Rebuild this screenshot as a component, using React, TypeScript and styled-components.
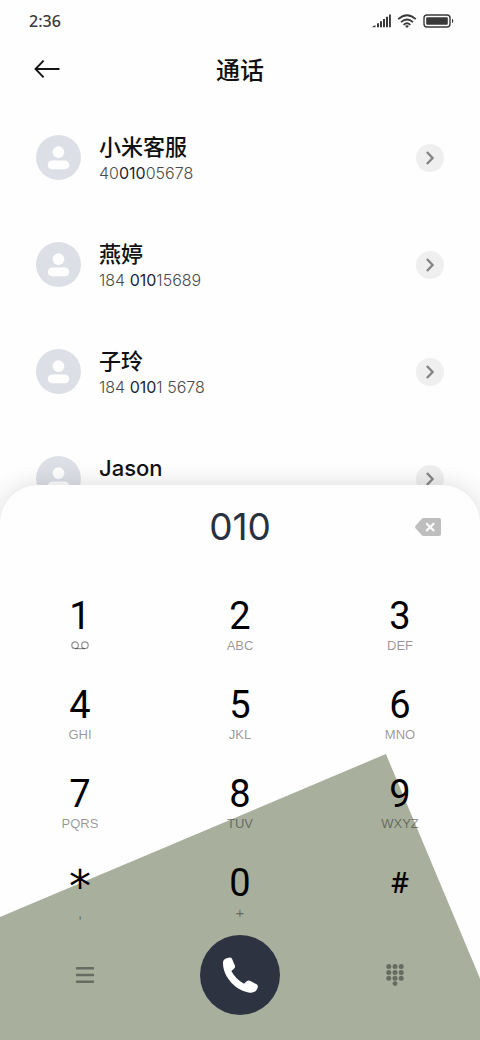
import React, { useState } from "react";
import styled, { createGlobalStyle } from "styled-components";

const GlobalStyle = createGlobalStyle`
  *, *::before { box-sizing: border-box; }
  body {
    margin: 0;
    background: #fefefe;
    color: #111;
    font-family: Inter, "Noto Sans CJK SC", sans-serif;
  }
  button, input { font: inherit; color: inherit; border: 0; background: none; padding: 0; margin: 0; }
  button { cursor: pointer; }
  svg { display: block; }
`;

const Screen = styled.div`
  display: flex;
  flex-direction: column;
  height: 100vh;
  overflow: hidden;
`;

const StatusBar = styled.div`
  display: flex;
  align-items: center;
  justify-content: space-between;
  height: 42px;
  flex: none;
  padding: 0 26px 0 29px;
  color: #3a3a3a;
`;

const Clock = styled.time`
  font-family: "Noto Sans", sans-serif;
  font-size: 16px;
  font-weight: 500;
`;

const StatusIcons = styled.div`
  display: flex;
  align-items: center;
  gap: 6px;
`;

const Header = styled.header`
  display: grid;
  grid-template-columns: 26px 1fr 26px;
  align-items: center;
  flex: none;
  height: 54px;
  padding: 0 34px;
`;

const Title = styled.h1`
  margin: 0;
  text-align: center;
  font-family: "Noto Sans CJK SC", sans-serif;
  font-size: 24px;
  line-height: 32px;
  font-weight: 500;
`;

const ContactList = styled.ul`
  flex: 1 1 0;
  min-height: 0;
  overflow: hidden;
  display: flex;
  flex-direction: column;
  gap: 60px;
  list-style: none;
  margin: 0;
  padding: 38px 36px 0;
`;

const ContactRow = styled.li`
  display: flex;
  align-items: center;
  flex: none;
  height: 47px;
  gap: 18px;
`;

const Avatar = styled.svg`
  flex: none;
  width: 45px;
  height: 45px;
`;

const ContactText = styled.div`
  flex: 1;
  align-self: flex-start;
`;

const ContactName = styled.div`
  font-size: 22px;
  line-height: 26px;
  font-weight: 500;
`;

const ContactNumber = styled.div`
  font-size: 16px;
  line-height: 26px;
  font-weight: 300;
  color: #4c4c4c;
`;

const Match = styled.span`
  font-weight: 400;
  color: #1f2536;
`;

const DetailButton = styled.button`
  display: grid;
  place-items: center;
  width: 28px;
  height: 28px;
  border-radius: 50%;
  background: #efefef;
`;

const Sheet = styled.section`
  position: relative;
  flex: none;
  margin-top: -36px;
  padding-bottom: 25px;
  border-radius: 38px 38px 0 0;
  background: #fefefe;
  box-shadow: 0 0 24px rgba(0, 0, 0, 0.14);

  &::before {
    content: "";
    position: absolute;
    inset: auto 0 0 0;
    height: 286px;
    background: #a8af9d;
    clip-path: polygon(0 57%, 80.4% 0, 100% 78.5%, 100% 100%, 0 100%);
  }

  & > * { position: relative; }
`;

const EntryRow = styled.div`
  display: grid;
  grid-template-columns: 26px 1fr 26px;
  align-items: center;
  height: 84px;
  padding: 0 39px;
`;

const Entry = styled.input`
  grid-column: 2;
  min-width: 0;
  text-align: center;
  outline: none;
  font-size: 37px;
  line-height: 46px;
  color: #293040;
`;

const Keypad = styled.div`
  display: grid;
  grid-template-columns: repeat(3, 1fr);
  row-gap: 28px;
  padding-top: 24px;
`;

const Key = styled.button`
  display: flex;
  flex-direction: column;
  align-items: center;
  height: 61px;
`;

const keyFonts = {
  digit: { family: "Roboto", size: 38, line: 46, weight: 400 },
  star: { family: "DejaVu Sans", size: 44, line: 54, weight: 400 },
  hash: { family: "Noto Sans", size: 28, line: 44, weight: 500 },
};

type KeyKind = keyof typeof keyFonts;

const KeyMain = styled.span<{ $kind: KeyKind }>`
  height: 44px;
  font-family: "${(p) => keyFonts[p.$kind].family}", sans-serif;
  font-size: ${(p) => keyFonts[p.$kind].size}px;
  font-weight: ${(p) => keyFonts[p.$kind].weight};
  line-height: ${(p) => keyFonts[p.$kind].line}px;
  color: #000;
`;

const KeySub = styled.span<{ $symbol?: boolean }>`
  display: flex;
  align-items: center;
  height: 17px;
  font-family: "Liberation Sans", sans-serif;
  font-size: ${(p) => (p.$symbol ? 15 : 13)}px;
  line-height: 17px;
  color: rgba(0, 0, 0, 0.42);
`;

const Actions = styled.div`
  display: flex;
  align-items: center;
  justify-content: space-between;
  padding: 14px 65px 0;
`;

const ToolButton = styled.button`
  display: grid;
  place-items: center;
  width: 40px;
  height: 40px;
  color: #676c60;
`;

const CallButton = styled.button`
  display: grid;
  place-items: center;
  width: 80px;
  height: 80px;
  border-radius: 50%;
  background: #2e3341;
`;

type Contact = { name: string; number?: [string, string, string] };

const contacts: Contact[] = [
  { name: "小米客服", number: ["40", "010", "05678"] },
  { name: "燕婷", number: ["184 ", "010", "15689"] },
  { name: "子玲", number: ["184 ", "010", "1 5678"] },
  { name: "Jason" },
];

const Voicemail = () => (
  <svg width="18" height="9" viewBox="0 0 18 9" fill="none" stroke="currentColor" strokeWidth="1.2" aria-label="Voicemail">
    <circle cx="4.1" cy="4.2" r="3.3" />
    <circle cx="13.9" cy="4.2" r="3.3" />
    <path d="M4 7.6H14" />
  </svg>
);

const keys: { main: string; sub?: React.ReactNode; kind?: KeyKind; symbol?: boolean }[] = [
  { main: "1", sub: <Voicemail /> },
  { main: "2", sub: "ABC" },
  { main: "3", sub: "DEF" },
  { main: "4", sub: "GHI" },
  { main: "5", sub: "JKL" },
  { main: "6", sub: "MNO" },
  { main: "7", sub: "PQRS" },
  { main: "8", sub: "TUV" },
  { main: "9", sub: "WXYZ" },
  { main: "*", sub: ",", kind: "star", symbol: true },
  { main: "0", sub: "+", symbol: true },
  { main: "#", kind: "hash" },
];

export default function App() {
  const [digits, setDigits] = useState("010");
  return (
    <>
      <GlobalStyle />
      <Screen>
        <StatusBar>
          <Clock>2:36</Clock>
          <StatusIcons>
            <svg width="19" height="14" viewBox="0 0 19 14" fill="#3a3a3a" aria-hidden="true">
              <path d="M.3 13.2Q.5 11.6 3.5 11.2V13.2ZM5 9.3h2v3.9H5ZM8 7.2h2v6H8ZM11 5h2v8.2H11ZM14 2.8h2v10.4H14ZM17 .6h1.9v12.6H17Z" />
            </svg>
            <svg width="20" height="14" viewBox="0 0 20 14" fill="none" stroke="#3a3a3a" strokeWidth="1.8" aria-hidden="true">
              <path d="M1.2 5.2Q10-2.8 18.8 5.2M4 8.1Q10 2.8 16 8.1M6.6 10.8Q10 7.8 13.4 10.8" />
              <path d="M8 11.9Q10 10.6 12 11.9L10 13.9Z" fill="#3a3a3a" stroke="none" />
            </svg>
            <svg width="31" height="14" viewBox="0 0 31 14" aria-hidden="true">
              <rect x="1" y="1" width="26" height="12" rx="3" fill="none" stroke="#3a3a3a" strokeWidth="1.4" />
              <rect x="3.2" y="3.2" width="21.6" height="7.6" rx="1" fill="#3a3a3a" />
              <path d="M29 5Q30.3 5 30.3 7T29 9Z" fill="#3a3a3a" />
            </svg>
          </StatusIcons>
        </StatusBar>

        <Header>
          <button aria-label="返回">
            <svg width="26" height="18" viewBox="0 0 26 18" fill="none" stroke="#151515" strokeWidth="1.9">
              <path d="M9.6.7 1.5 9l8.1 8.3M1.5 9H25.5" />
            </svg>
          </button>
          <Title>通话</Title>
        </Header>

        <ContactList>
          {contacts.map((c) => (
            <ContactRow key={c.name}>
              <Avatar viewBox="0 0 46 46" aria-hidden="true">
                <circle cx="23" cy="23" r="23" fill="#dce0e6" />
                <circle cx="23" cy="17.5" r="6" fill="#fefefe" />
                <rect x="12" y="26" width="22" height="9" rx="4.5" fill="#fefefe" />
              </Avatar>
              <ContactText>
                <ContactName>{c.name}</ContactName>
                {c.number && (
                  <ContactNumber>
                    {c.number[0]}
                    <Match>{c.number[1]}</Match>
                    {c.number[2]}
                  </ContactNumber>
                )}
              </ContactText>
              <DetailButton aria-label={c.name}>
                <svg width="8" height="14" viewBox="0 0 8 14" fill="none" stroke="#858585" strokeWidth="2.4">
                  <path d="M.9 1 6.6 7 .9 13" />
                </svg>
              </DetailButton>
            </ContactRow>
          ))}
        </ContactList>

        <Sheet>
          <EntryRow>
            <Entry type="tel" aria-label="号码" value={digits} onChange={(e) => setDigits(e.target.value)} />
            <button aria-label="删除" onClick={() => setDigits(digits.slice(0, -1))}>
              <svg width="26" height="18" viewBox="0 0 26 18">
                <path d="M8.6 0H24a2 2 0 0 1 2 2V16a2 2 0 0 1-2 2H8.6Q7.6 18 6.8 17.2L.6 10.2Q-.3 9 .6 7.8L6.8.8Q7.6 0 8.6 0Z" fill="#bebebe" />
                <path d="M11.2 5.2l8 7.8M19.2 5.2l-8 7.8" stroke="#fff" strokeWidth="2" />
              </svg>
            </button>
          </EntryRow>

          <Keypad>
            {keys.map((k) => (
              <Key key={k.main} onClick={() => setDigits(digits + k.main)}>
                <KeyMain $kind={k.kind ?? "digit"}>{k.main}</KeyMain>
                {k.sub && <KeySub $symbol={k.symbol}>{k.sub}</KeySub>}
              </Key>
            ))}
          </Keypad>

          <Actions>
            <ToolButton aria-label="菜单">
              <svg width="20" height="18" viewBox="0 0 20 18" stroke="currentColor" strokeWidth="2.4" strokeLinecap="round">
                <path d="M2 2.2H18M2 9H18M2 15.8H18" />
              </svg>
            </ToolButton>
            <CallButton aria-label="呼叫">
              <svg width="36" height="36" viewBox="0 0 108 108" fill="#fff">
                <path d="M3 19C3 9 8 4 20 2Q27 0 30 5L38 24Q41 30 36 35L28 42C36 58 50 72 66 80L74 73Q79 69 85 72L104 82Q109 86 107 92C103 103 95 108 84 107C45 104 3 62 3 19Z" />
              </svg>
            </CallButton>
            <ToolButton aria-label="拨号键盘">
              <svg width="18" height="22" viewBox="0 0 18 22" fill="currentColor">
                {[2.6, 8.4, 14.2].map((y) => [2.8, 9, 15.2].map((x) => <circle key={`${x}-${y}`} cx={x} cy={y} r="2.5" />))}
                <circle cx="9" cy="19.6" r="2.4" />
              </svg>
            </ToolButton>
          </Actions>
        </Sheet>
      </Screen>
    </>
  );
}
